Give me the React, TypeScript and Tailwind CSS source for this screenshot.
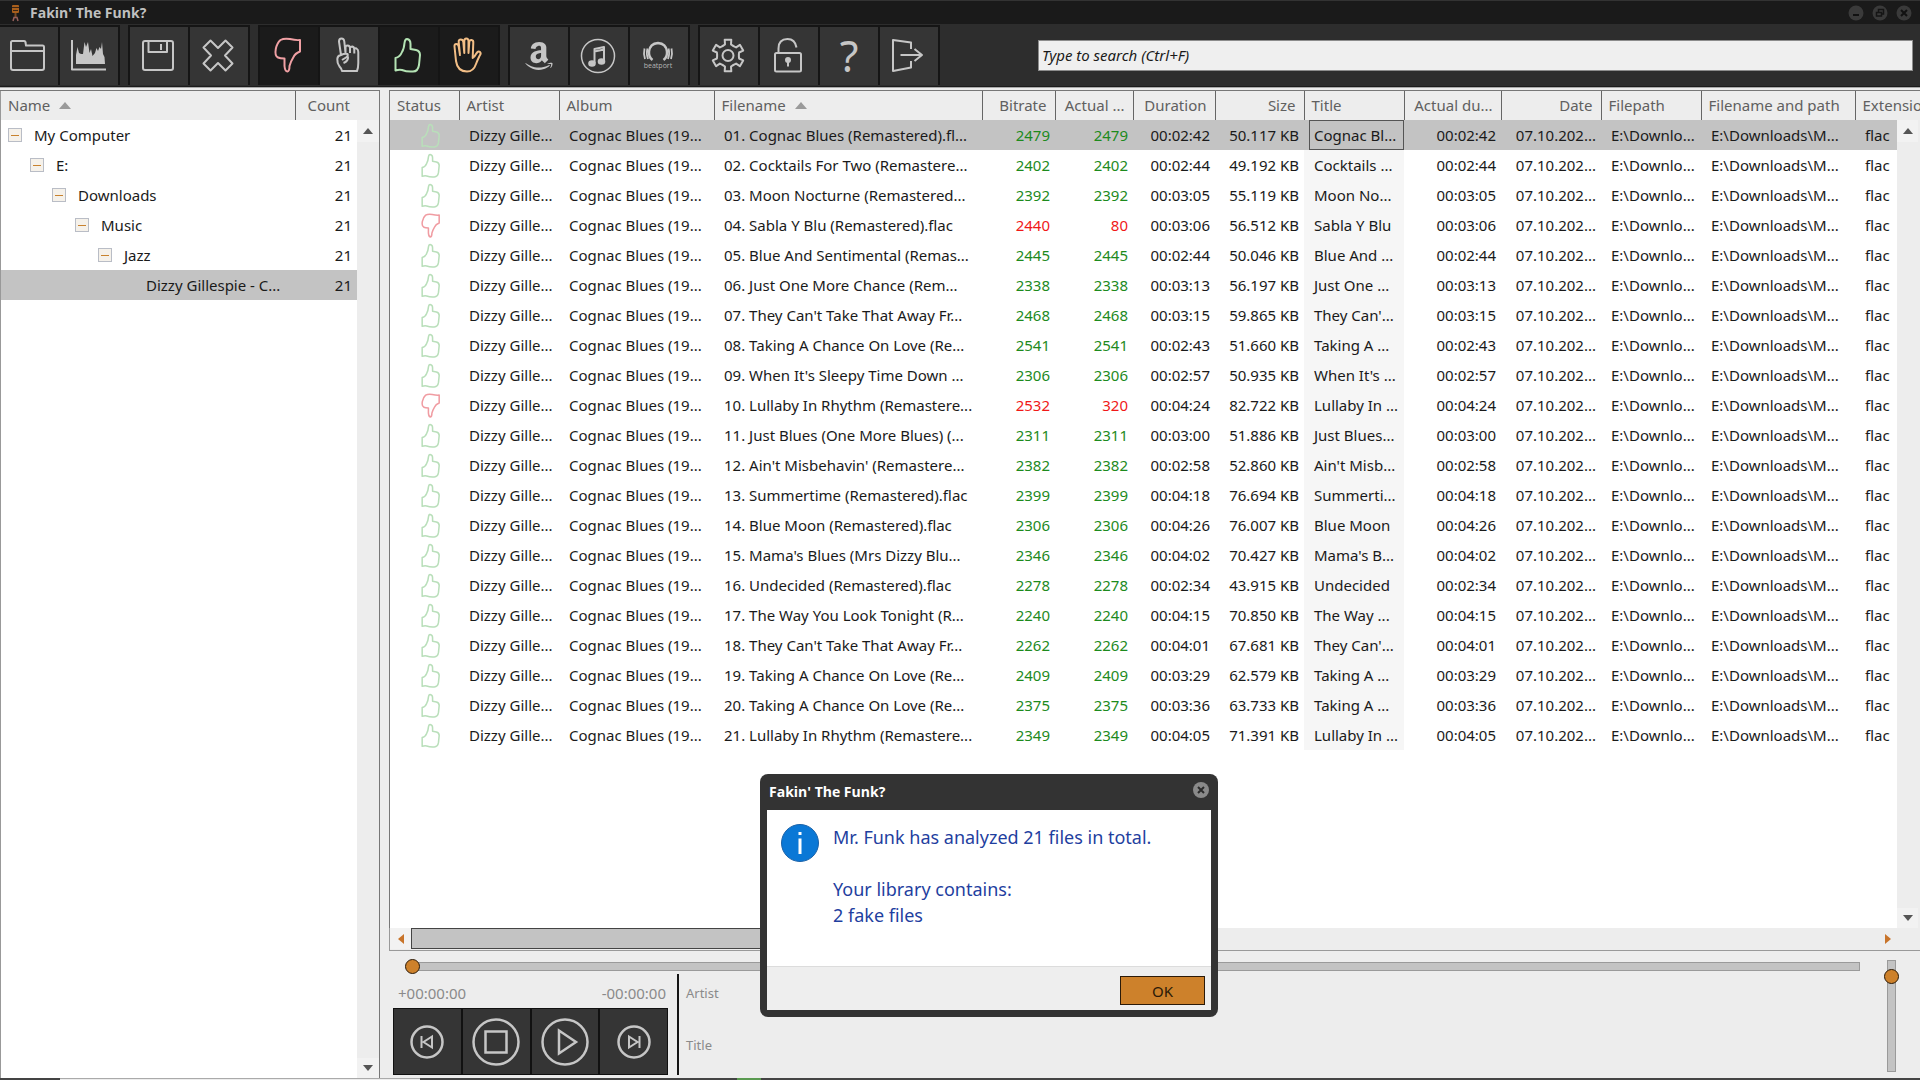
import { useState } from "react";
import type { ReactNode } from "react";
import { FaAmazon } from "react-icons/fa";

type Track = {
  file: string;
  bitrate: string;
  actual: string;
  duration: string;
  size: string;
  title: string;
  fake?: boolean;
};

const tracks: Track[] = [
  { file: "01. Cognac Blues (Remastered).fl...", bitrate: "2479", actual: "2479", duration: "00:02:42", size: "50.117 KB", title: "Cognac Bl..." },
  { file: "02. Cocktails For Two (Remastere...", bitrate: "2402", actual: "2402", duration: "00:02:44", size: "49.192 KB", title: "Cocktails ..." },
  { file: "03. Moon Nocturne (Remastered...", bitrate: "2392", actual: "2392", duration: "00:03:05", size: "55.119 KB", title: "Moon No..." },
  { file: "04. Sabla Y Blu (Remastered).flac", bitrate: "2440", actual: "80", duration: "00:03:06", size: "56.512 KB", title: "Sabla Y Blu", fake: true },
  { file: "05. Blue And Sentimental (Remas...", bitrate: "2445", actual: "2445", duration: "00:02:44", size: "50.046 KB", title: "Blue And ..." },
  { file: "06. Just One More Chance (Rem...", bitrate: "2338", actual: "2338", duration: "00:03:13", size: "56.197 KB", title: "Just One ..." },
  { file: "07. They Can't Take That Away Fr...", bitrate: "2468", actual: "2468", duration: "00:03:15", size: "59.865 KB", title: "They Can'..." },
  { file: "08. Taking A Chance On Love (Re...", bitrate: "2541", actual: "2541", duration: "00:02:43", size: "51.660 KB", title: "Taking A ..." },
  { file: "09. When It's Sleepy Time Down ...", bitrate: "2306", actual: "2306", duration: "00:02:57", size: "50.935 KB", title: "When It's ..." },
  { file: "10. Lullaby In Rhythm (Remastere...", bitrate: "2532", actual: "320", duration: "00:04:24", size: "82.722 KB", title: "Lullaby In ...", fake: true },
  { file: "11. Just Blues (One More Blues) (...", bitrate: "2311", actual: "2311", duration: "00:03:00", size: "51.886 KB", title: "Just Blues..." },
  { file: "12. Ain't Misbehavin' (Remastere...", bitrate: "2382", actual: "2382", duration: "00:02:58", size: "52.860 KB", title: "Ain't Misb..." },
  { file: "13. Summertime (Remastered).flac", bitrate: "2399", actual: "2399", duration: "00:04:18", size: "76.694 KB", title: "Summerti..." },
  { file: "14. Blue Moon (Remastered).flac", bitrate: "2306", actual: "2306", duration: "00:04:26", size: "76.007 KB", title: "Blue Moon" },
  { file: "15. Mama's Blues (Mrs Dizzy Blu...", bitrate: "2346", actual: "2346", duration: "00:04:02", size: "70.427 KB", title: "Mama's B..." },
  { file: "16. Undecided (Remastered).flac", bitrate: "2278", actual: "2278", duration: "00:02:34", size: "43.915 KB", title: "Undecided" },
  { file: "17. The Way You Look Tonight (R...", bitrate: "2240", actual: "2240", duration: "00:04:15", size: "70.850 KB", title: "The Way ..." },
  { file: "18. They Can't Take That Away Fr...", bitrate: "2262", actual: "2262", duration: "00:04:01", size: "67.681 KB", title: "They Can'..." },
  { file: "19. Taking A Chance On Love (Re...", bitrate: "2409", actual: "2409", duration: "00:03:29", size: "62.579 KB", title: "Taking A ..." },
  { file: "20. Taking A Chance On Love (Re...", bitrate: "2375", actual: "2375", duration: "00:03:36", size: "63.733 KB", title: "Taking A ..." },
  { file: "21. Lullaby In Rhythm (Remastere...", bitrate: "2349", actual: "2349", duration: "00:04:05", size: "71.391 KB", title: "Lullaby In ..." },
];

const columns = [
  { label: "Status", width: "w-[69px]" },
  { label: "Artist", width: "w-[100px]" },
  { label: "Album", width: "w-[155px]" },
  { label: "Filename", width: "w-[268px]", sorted: true },
  { label: "Bitrate", width: "w-[73px]", right: true },
  { label: "Actual ...", width: "w-[78px]", right: true },
  { label: "Duration", width: "w-[82px]", right: true },
  { label: "Size", width: "w-[89px]", right: true },
  { label: "Title", width: "w-[100px]" },
  { label: "Actual du...", width: "w-[97px]", right: true },
  { label: "Date", width: "w-[100px]", right: true },
  { label: "Filepath", width: "w-[100px]" },
  { label: "Filename and path", width: "w-[154px]" },
  { label: "Extension", width: "" },
];

const folders = [
  { name: "My Computer", indent: "pl-[7px]" },
  { name: "E:", indent: "pl-[29px]" },
  { name: "Downloads", indent: "pl-[51px]" },
  { name: "Music", indent: "pl-[74px]" },
  { name: "Jazz", indent: "pl-[97px]" },
  { name: "Dizzy Gillespie - C...", indent: "pl-[145px]", leaf: true },
];

const THUMB_UP =
  "M15.5 31Q20 30 22 25Q24 22 24.5 16Q25 12 27 12Q30.5 12.5 30.5 17V22L36 23Q40 24 40 28L39 38Q38 44.5 33 44.5Q27 45 22 43Q19 42.5 15.5 43.5Z";
const THUMB_DOWN =
  "M40 13Q36 13.5 30 12Q24 11 20.5 13Q17 16 15.8 22Q14.5 29 18 30.500Q20 31.500 24.500 31.500V39Q25 44.500 27.500 44.500Q29.500 44 29.500 39Q31 34 33.500 30Q35 26.500 40 24.500Z";

// six teeth, each one a flat top with sloping sides
const gearPoints = Array.from({ length: 6 }, (_, i) => {
  const base = i * 60 - 90;
  return [
    [-24, 11],
    [-15, 11.5],
    [-12, 16],
    [12, 16],
    [15, 11.5],
    [24, 11],
  ]
    .map(([offset, r]) => {
      const a = ((base + offset) * Math.PI) / 180;
      return `${(28 + r * Math.cos(a)).toFixed(1)},${(28.5 + r * Math.sin(a)).toFixed(1)}`;
    })
    .join(" ");
}).join(" ");

function Glyph({ children, color = "stroke-[#c6c6c6]" }: { children: ReactNode; color?: string }) {
  return (
    <svg viewBox="0 0 58 58" className={`size-[58px] fill-none ${color}`} strokeWidth="2" strokeLinejoin="round" aria-hidden="true">
      {children}
    </svg>
  );
}

function ToolButton({ label, active, children }: { label: string; active?: boolean; children: ReactNode }) {
  return (
    <button
      type="button"
      aria-label={label}
      className={`flex h-[58px] w-[58px] items-center justify-center ${active ? "bg-[#1b1b1b]" : "bg-[#353535]"}`}
    >
      {children}
    </button>
  );
}

function ToolGroup({ children }: { children: ReactNode }) {
  return <div className="flex gap-[2px] border-2 border-b-0 border-[#151515] bg-[#151515]">{children}</div>;
}

function Toolbar() {
  return (
    <div className="flex h-[63px] shrink-0 items-center gap-2 border-b border-[#1c1c1c] bg-[#2d2d2d] pr-[7px]">
      <div className="-ml-[2px]">
        <ToolGroup>
          <ToolButton label="Open folder">
            <Glyph>
              <path d="M11 41V15.5Q11 14 12.5 14H24Q25.500 14 25.500 15.500L26 18.500H42.500Q44 18.500 44 20V41Q44 43 42 43H13Q11 43 11 41ZM11 24H44" />
            </Glyph>
          </ToolButton>
          <ToolButton label="Spectrum">
            <Glyph>
              <path d="M12 13V42.500H46" />
              <path
                d="M16 37V28L17.500 20 19 26 21 27 23 27 24.500 15 26 20 28 15 29.500 26 31 22 32.500 29 35 26 36.500 21 38 24 39.500 20 41 22 42 15 43 27 44.500 30 45 37Z"
                className="fill-[#c6c6c6]"
                stroke="none"
              />
            </Glyph>
          </ToolButton>
        </ToolGroup>
      </div>
      <ToolGroup>
        <ToolButton label="Save">
          <Glyph>
            <path d="M15 14H41Q43 14 43 16V41Q43 43 41 43H15Q13 43 13 41V16Q13 14 15 14Z" />
            <path d="M18.500 14V25H37V14M31 17V23" />
          </Glyph>
        </ToolButton>
        <ToolButton label="Remove">
          <Glyph>
            <path d="M28 21L35.500 13.500 42.500 20.500 35 28.500 42.500 36.500 35.500 43.500 28 36 20.500 43.500 13.500 36.500 21 28.500 13.500 20.500 20.500 13.500Z" />
          </Glyph>
        </ToolButton>
      </ToolGroup>
      <ToolGroup>
        <ToolButton label="Show fakes" active>
          <Glyph color="stroke-[#f0a0a4]">
            <path d={THUMB_DOWN} />
          </Glyph>
        </ToolButton>
        <ToolButton label="Show unchecked">
          <Glyph>
            <path d="M21 28L19 14.500Q19 11.500 21.500 11.500Q24 11.500 24.300 14.500L25.500 26V20.500Q25.500 18.500 27.500 18.500Q30 18.500 30 21V26M30 21Q30.500 19.500 32.300 19.500Q34.300 20 34.300 22.500V26.500M34.300 22Q35 21 36.500 21.500Q38.300 22.500 38.300 25V36Q38.300 41 37 44H22Q22 42 19.500 39.500Q17 36 17.300 32Q17.500 28.500 21 28Q25 26 27.500 27Q28.500 29 26 30.500L22 33M28 29.500Q28.500 34 23.500 36" />
          </Glyph>
        </ToolButton>
        <ToolButton label="Show good" active>
          <Glyph color="stroke-[#b4e3b4]">
            <path d={THUMB_UP} />
          </Glyph>
        </ToolButton>
        <ToolButton label="Show stopped" active>
          <Glyph color="stroke-[#f2be86]">
            <path d="M16 34L14.500 19.500Q14.300 17 16.300 17Q18.300 17 18.700 19.500L20 28L18.700 15Q18.500 12.500 20.800 12.500Q23 12.500 23.300 15L24.300 26V14Q24.300 11.500 26.300 11.500Q28.500 11.500 28.500 14V26L29.300 15Q29.500 12.800 31.500 13Q33.500 13.300 33.300 15.500L32.700 31Q34.500 30 36 27Q38 23.500 40 25Q41.500 26.500 39.500 29Q37.500 33 36 37Q33.500 44.500 27 44.500Q17.500 44.500 16 34Z" />
          </Glyph>
        </ToolButton>
      </ToolGroup>
      <ToolGroup>
        <ToolButton label="Amazon">
          <FaAmazon className="size-8 text-[#c6c6c6]" />
        </ToolButton>
        <ToolButton label="iTunes">
          <Glyph>
            <circle cx="28" cy="29" r="16.500" strokeWidth="1.500" />
            <path d="M24.500 36V22L34 20V34M24.500 24.500L34 22.500" />
            <ellipse cx="22" cy="36.500" rx="2.800" ry="2.200" className="fill-[#c6c6c6]" />
            <ellipse cx="31.500" cy="34.500" rx="2.800" ry="2.200" className="fill-[#c6c6c6]" />
          </Glyph>
        </ToolButton>
        <ToolButton label="Beatport">
          <Glyph>
            <path d="M22.500 33Q18.500 30 19 24.500 20 16.500 28 16 36 16.500 37 24.500 37.500 30 33.500 33" strokeWidth="2.500" />
            <path d="M17.500 21.500Q16 26.500 18 32M14.500 21.500Q13.300 26.500 15 32M38.500 21.500Q40 26.500 38 32M41.500 21.500Q42.700 26.500 41 32" strokeWidth="1.800" />
            <text x="28" y="41" textAnchor="middle" stroke="none" className="fill-[#b4b4b4] font-['Open_Sans',sans-serif] text-[7px]">
              beatport
            </text>
          </Glyph>
        </ToolButton>
      </ToolGroup>
      <ToolGroup>
        <ToolButton label="Settings">
          <Glyph>
            <polygon points={gearPoints} />
            <circle cx="28" cy="28.500" r="5.500" />
          </Glyph>
        </ToolButton>
        <ToolButton label="Unlock">
          <Glyph>
            <rect x="15" y="26" width="26" height="18.500" rx="1.500" />
            <path d="M18.500 26V21.500Q18.500 12 27.500 12 35 12 36.500 20.500" />
            <circle cx="28" cy="33" r="2" className="fill-[#c6c6c6]" />
            <path d="M28 34V39.500" />
          </Glyph>
        </ToolButton>
        <ToolButton label="Help">
          <span className="text-[43px] leading-[58px] text-[#c6c6c6]">?</span>
        </ToolButton>
        <ToolButton label="Exit">
          <Glyph>
            <path d="M31 22V15.500L13 13V44L31 40.500V34M20.500 28H42M34.500 22L42 28 34.500 34" />
          </Glyph>
        </ToolButton>
      </ToolGroup>
      <input
        type="text"
        aria-label="Search"
        placeholder="Type to search (Ctrl+F)"
        className="ml-[90px] h-[31px] min-w-0 flex-1 border border-[#8c8c8c] bg-[#efefef] px-[3px] italic outline-none placeholder:text-[#1a1a1a]"
      />
    </div>
  );
}

function TitleBar() {
  return (
    <header className="flex h-6 shrink-0 items-center border-t border-[#333] bg-[#1a1a1a] pr-2 pl-[9px]">
      <svg viewBox="0 0 12 18" className="mr-[9px] h-[18px] w-3" aria-hidden="true">
        <rect x="3" y="1" width="7" height="8" rx="1" fill="#a85f1c" />
        <path d="M3 3.500H10M4 6.500H9" stroke="#3a2413" />
        <path d="M6.500 9V13" stroke="#7a4a22" strokeWidth="2" />
        <path d="M4 17L5 13.500H8L9 17" fill="none" stroke="#96615c" strokeWidth="1.500" />
      </svg>
      <h1 className="flex-1 font-['Open_Sans',sans-serif] text-[14px] font-bold text-[#c0c0c0]">Fakin' The Funk?</h1>
      <div className="flex gap-2">
        <button type="button" aria-label="Minimize">
          <svg viewBox="0 0 16 16" className="size-4" aria-hidden="true">
            <circle cx="8" cy="8" r="7.500" fill="#3a3a3a" />
            <path d="M5 10H11" stroke="#111" strokeWidth="2" />
          </svg>
        </button>
        <button type="button" aria-label="Restore">
          <svg viewBox="0 0 16 16" className="size-4" aria-hidden="true">
            <circle cx="8" cy="8" r="7.500" fill="#3a3a3a" />
            <path d="M4.500 7.500H9.500V11H4.500ZM6.500 7V4.500H11.500V9H10" fill="none" stroke="#151515" strokeWidth="1.500" />
          </svg>
        </button>
        <button type="button" aria-label="Close">
          <svg viewBox="0 0 16 16" className="size-4" aria-hidden="true">
            <circle cx="8" cy="8" r="7.500" fill="#3a3a3a" />
            <path d="M5 5L11 11M11 5L5 11" stroke="#111" strokeWidth="2" />
          </svg>
        </button>
      </div>
    </header>
  );
}

function Arrow({ d, color = "fill-[#555]" }: { d: string; color?: string }) {
  return (
    <svg viewBox="0 0 10 10" className={`size-[10px] ${color}`} aria-hidden="true">
      <path d={d} />
    </svg>
  );
}

function SortArrow() {
  return (
    <svg viewBox="0 0 12 7" className="mb-[2px] ml-[9px] inline-block h-[7px] w-3 fill-[#9a9a9a]" aria-hidden="true">
      <path d="M0 7L6 0 12 7Z" />
    </svg>
  );
}

function VerticalScroll() {
  return (
    <div className="flex flex-1 flex-col items-center justify-between">
      <button type="button" aria-label="Scroll up" className="flex h-[22px] w-full items-center justify-center bg-[#f2f2f2]">
        <Arrow d="M0 8L5 2 10 8Z" />
      </button>
      <button type="button" aria-label="Scroll down" className="flex h-5 w-full items-center justify-center bg-[#f2f2f2]">
        <Arrow d="M0 2L5 8 10 2Z" />
      </button>
    </div>
  );
}

function FolderTree() {
  return (
    <aside className="flex w-[380px] shrink-0 border-t border-r border-[#777] bg-[#ededed]">
      <div className="w-[357px] border-l border-[#999] bg-white">
        <table className="w-full table-fixed border-collapse">
          <thead>
            <tr className="h-[29px] bg-[#ededed] text-[#606060]">
              <th scope="col" className="p-0 pb-[2px] pl-[7px] text-left font-normal whitespace-nowrap">
                Name
                <SortArrow />
              </th>
              <th scope="col" className="w-[62px] border-l border-[#666] p-0 pr-[7px] pb-[2px] text-right font-normal">
                Count
              </th>
            </tr>
          </thead>
          <tbody>
            {folders.map((folder) => (
              <tr key={folder.name} className={`h-[30px] ${folder.leaf ? "bg-[#c3c3c3]" : ""}`}>
                <td className="p-0">
                  <div className={`flex items-center gap-3 whitespace-nowrap ${folder.indent}`}>
                    {!folder.leaf && (
                      <button
                        type="button"
                        aria-label={`Collapse ${folder.name}`}
                        className="flex size-[14px] items-center justify-center border border-[#b9bdc6] bg-[#f5f1ea]"
                      >
                        <span className="h-px w-2 bg-[#c8822e]" />
                      </button>
                    )}
                    {folder.name}
                  </div>
                </td>
                <td className="p-0 pr-[5px] text-right">21</td>
              </tr>
            ))}
          </tbody>
        </table>
      </div>
      <div className="flex flex-1 flex-col pt-[29px]">
        <VerticalScroll />
      </div>
    </aside>
  );
}

function StatusIcon({ fake }: { fake?: boolean }) {
  return (
    <svg
      viewBox="14 10 27 36"
      className={`mx-auto h-[25px] w-[19px] fill-none ${fake ? "stroke-[#f09ca2]" : "stroke-[#b9dfba]"}`}
      strokeWidth="2.200"
      strokeLinejoin="round"
      role="img"
      aria-label={fake ? "Fake" : "Good"}
    >
      <path d={fake ? THUMB_DOWN : THUMB_UP} />
    </svg>
  );
}

function TrackTable() {
  const [selected, setSelected] = useState(0);

  return (
    <div className="flex min-h-0 flex-1 overflow-hidden border-t border-l border-[#777] bg-[#ededed]">
      <div className="min-w-0 flex-1 self-stretch bg-[linear-gradient(#ededed_29px,#fff_29px)]">
        <table className="w-full table-fixed border-collapse">
          <thead>
            <tr className="h-[29px] text-[#606060]">
              {columns.map((col, i) => (
                <th
                  key={col.label}
                  scope="col"
                  className={`p-0 pb-[2px] font-normal whitespace-nowrap ${col.width} ${i > 0 ? "border-l border-[#666]" : ""} ${
                    col.right ? "pr-2 text-right" : "pl-[7px] text-left"
                  }`}
                >
                  {col.label}
                  {col.sorted && <SortArrow />}
                </th>
              ))}
            </tr>
          </thead>
          <tbody>
            {tracks.map((track, i) => {
              const rate = track.fake ? "text-[#f01818]" : "text-[#1d8a1d]";
              const isSelected = i === selected;
              return (
                <tr
                  key={track.file}
                  onClick={() => setSelected(i)}
                  className={`h-[30px] whitespace-nowrap ${isSelected ? "bg-[#c3c3c3]" : "bg-white"}`}
                >
                  <td className="p-0 pl-3">
                    <StatusIcon fake={track.fake} />
                  </td>
                  <td className="p-0 pl-[10px]">Dizzy Gille...</td>
                  <td className="p-0 pl-[10px]">Cognac Blues (19...</td>
                  <td className="p-0 pl-[10px]">{track.file}</td>
                  <td className={`p-0 pr-[5px] text-right ${rate}`}>{track.bitrate}</td>
                  <td className={`p-0 pr-[5px] text-right ${rate}`}>{track.actual}</td>
                  <td className="p-0 pr-[5px] text-right">{track.duration}</td>
                  <td className="p-0 pr-[5px] text-right">{track.size}</td>
                  <td className={`p-0 pl-[5px] ${isSelected ? "" : "bg-[#f6f6f6]"}`}>
                    <div className={`h-[30px] border pl-1 leading-7 ${isSelected ? "border-[#555]" : "border-transparent"}`}>
                      {track.title}
                    </div>
                  </td>
                  <td className="p-0 pr-[5px] text-right">{track.duration}</td>
                  <td className="p-0 pr-[5px] text-right">07.10.202...</td>
                  <td className="p-0 pl-[10px]">E:\Downlo...</td>
                  <td className="p-0 pl-[10px]">E:\Downloads\M...</td>
                  <td className="p-0 pl-[10px]">flac</td>
                </tr>
              );
            })}
          </tbody>
        </table>
      </div>
      <div className="flex w-[21px] shrink-0 flex-col pt-[29px]">
        <VerticalScroll />
      </div>
      <div className="w-[2px] shrink-0" />
    </div>
  );
}

function HorizontalScroll() {
  return (
    <div className="flex h-[23px] shrink-0 items-start border-b border-l border-[#999] bg-[#ededed] pr-[21px]">
      <button type="button" aria-label="Scroll left" className="flex h-[21px] w-[21px] items-center justify-center bg-[#f2f2f2]">
        <Arrow d="M8 0L2 5 8 10Z" color="fill-[#c8742a]" />
      </button>
      <div className="flex-1">
        <div className="h-[21px] w-1/2 border border-[#444] bg-[#c3c3c3]" />
      </div>
      <button type="button" aria-label="Scroll right" className="flex h-[21px] w-[21px] items-center justify-center">
        <Arrow d="M1 0L7 5 1 10Z" color="fill-[#c8742a]" />
      </button>
    </div>
  );
}

function PlayerButton({ label, small, children }: { label: string; small?: boolean; children: ReactNode }) {
  return (
    <button type="button" aria-label={label} className="flex h-[65px] flex-1 items-center justify-center bg-[#353535]">
      <svg viewBox="0 0 48 48" className="size-12 fill-none stroke-[#c6c6c6]" strokeWidth="2.500" aria-hidden="true">
        <circle cx="24" cy="24" r={small ? 15.5 : 22.5} />
        {children}
      </svg>
    </button>
  );
}

function Player() {
  const [position, setPosition] = useState(0);
  const [volume, setVolume] = useState(92);

  return (
    <div className="flex h-[127px] shrink-0 pr-[21px] pl-1">
      <div className="flex min-w-0 flex-1 flex-col">
        <input
          type="range"
          aria-label="Position"
          value={position}
          onChange={(e) => setPosition(Number(e.target.value))}
          className="mt-[7px] ml-[11px] h-4 appearance-none bg-transparent [&::-webkit-slider-runnable-track]:ml-[7px] [&::-webkit-slider-runnable-track]:h-[9px] [&::-webkit-slider-runnable-track]:border [&::-webkit-slider-runnable-track]:border-[#9a9a9a] [&::-webkit-slider-runnable-track]:bg-[#c3c3c3] [&::-webkit-slider-thumb]:-mt-1 [&::-webkit-slider-thumb]:-ml-[7px] [&::-webkit-slider-thumb]:size-[15px] [&::-webkit-slider-thumb]:appearance-none [&::-webkit-slider-thumb]:rounded-full [&::-webkit-slider-thumb]:border [&::-webkit-slider-thumb]:border-[#2b1a08] [&::-webkit-slider-thumb]:bg-[#cd812b]"
        />
        <div className="flex flex-1 gap-[9px]">
          <div className="w-[275px]">
            <div className="flex justify-between pt-[9px] pr-[2px] pb-[5px] pl-[5px] text-[#8a8a8a]">
              <span>+00:00:00</span>
              <span>-00:00:00</span>
            </div>
            <div className="flex gap-[2px] border border-[#111] bg-[#111]">
              <PlayerButton label="Previous" small>
                <path d="M18.500 18V30M29 18.500V29.500L20.500 24Z" strokeWidth="2" />
              </PlayerButton>
              <PlayerButton label="Stop">
                <path d="M13.500 13.500H34.500V34.500H13.500Z" />
              </PlayerButton>
              <PlayerButton label="Play">
                <path d="M18 12.500V35.500L35 24Z" />
              </PlayerButton>
              <PlayerButton label="Next" small>
                <path d="M29.500 18V30M19 18.500V29.500L27.500 24Z" strokeWidth="2" />
              </PlayerButton>
            </div>
          </div>
          <div className="mb-[3px] w-[2px] bg-[#151515]" />
          <div className="-ml-[2px] flex flex-col gap-8 pt-[9px] text-[13px] leading-5 text-[#8a8a8a]">
            <span>Artist</span>
            <span>Title</span>
          </div>
        </div>
      </div>
      <div className="ml-[23px] pt-[9px]">
        <input
          type="range"
          aria-label="Volume"
          value={volume}
          onChange={(e) => setVolume(Number(e.target.value))}
          className="h-28 w-4 appearance-none bg-transparent [direction:rtl] [writing-mode:vertical-lr] [&::-webkit-slider-runnable-track]:w-[9px] [&::-webkit-slider-runnable-track]:border [&::-webkit-slider-runnable-track]:border-[#9a9a9a] [&::-webkit-slider-runnable-track]:bg-[#c3c3c3] [&::-webkit-slider-thumb]:-ml-1 [&::-webkit-slider-thumb]:size-[15px] [&::-webkit-slider-thumb]:appearance-none [&::-webkit-slider-thumb]:rounded-full [&::-webkit-slider-thumb]:border [&::-webkit-slider-thumb]:border-[#2b1a08] [&::-webkit-slider-thumb]:bg-[#cd812b]"
        />
      </div>
    </div>
  );
}

function ResultDialog({ onClose }: { onClose: () => void }) {
  return (
    <div
      role="dialog"
      aria-labelledby="dialog-title"
      className="absolute top-[774px] left-[760px] w-[458px] rounded-lg bg-[#333] px-[7px] pb-[7px]"
    >
      <div className="flex h-9 items-center justify-between pr-[2px] pl-[2px]">
        <h2 id="dialog-title" className="font-['Open_Sans',sans-serif] text-[14px] font-bold text-white">
          Fakin' The Funk?
        </h2>
        <button type="button" aria-label="Close dialog" onClick={onClose} className="mb-1">
          <svg viewBox="0 0 16 16" className="size-4" aria-hidden="true">
            <circle cx="8" cy="8" r="8" fill="#8a8a8a" />
            <path d="M5 5L11 11M11 5L5 11" stroke="#2b2b2b" strokeWidth="2" />
          </svg>
        </button>
      </div>
      <div className="flex h-[156px] gap-[14px] bg-white pt-[14px] pl-[14px]">
        <svg viewBox="0 0 38 38" className="size-[38px]" aria-hidden="true">
          <circle cx="19" cy="19" r="18.500" fill="#0a78d6" stroke="#1b62a8" />
          <path d="M19 14.500V30M19 8V11" stroke="#fff" strokeWidth="3" />
        </svg>
        <div className="text-[18px] leading-[26px] text-[#1f3f9f]">
          <p className="mb-[26px]">Mr. Funk has analyzed 21 files in total.</p>
          <p>Your library contains:</p>
          <p>2 fake files</p>
        </div>
      </div>
      <div className="flex h-11 justify-end border-t border-[#dcdcdc] bg-[#eee] pt-[9px] pr-[6px]">
        <button type="button" onClick={onClose} className="h-[29px] w-[85px] border border-[#2b1a08] bg-[#cd812b] text-[#2b1a08]">
          OK
        </button>
      </div>
    </div>
  );
}

export default function App() {
  const [dialogOpen, setDialogOpen] = useState(true);

  return (
    <div className="relative flex h-screen flex-col overflow-hidden bg-[#ededed] font-['Noto_Sans',sans-serif] text-[15px] leading-5 text-[#1a1a1a]">
      <TitleBar />
      <Toolbar />
      <main className="flex min-h-0 flex-1 gap-[9px] border-t border-[#aaa] pt-[2px]">
        <FolderTree />
        <div className="flex min-w-0 flex-1 flex-col">
          <TrackTable />
          <HorizontalScroll />
          <Player />
        </div>
      </main>
      <div className="flex h-[2px] shrink-0">
        <div className="w-[60px] bg-[#444]" />
        <div className="w-[360px] border-t border-[#aaa]" />
        <div className="w-[317px] bg-[#444]" />
        <div className="w-6 bg-[#5a9a50]" />
        <div className="flex-1 bg-[#444]" />
      </div>
      {dialogOpen && <ResultDialog onClose={() => setDialogOpen(false)} />}
    </div>
  );
}
